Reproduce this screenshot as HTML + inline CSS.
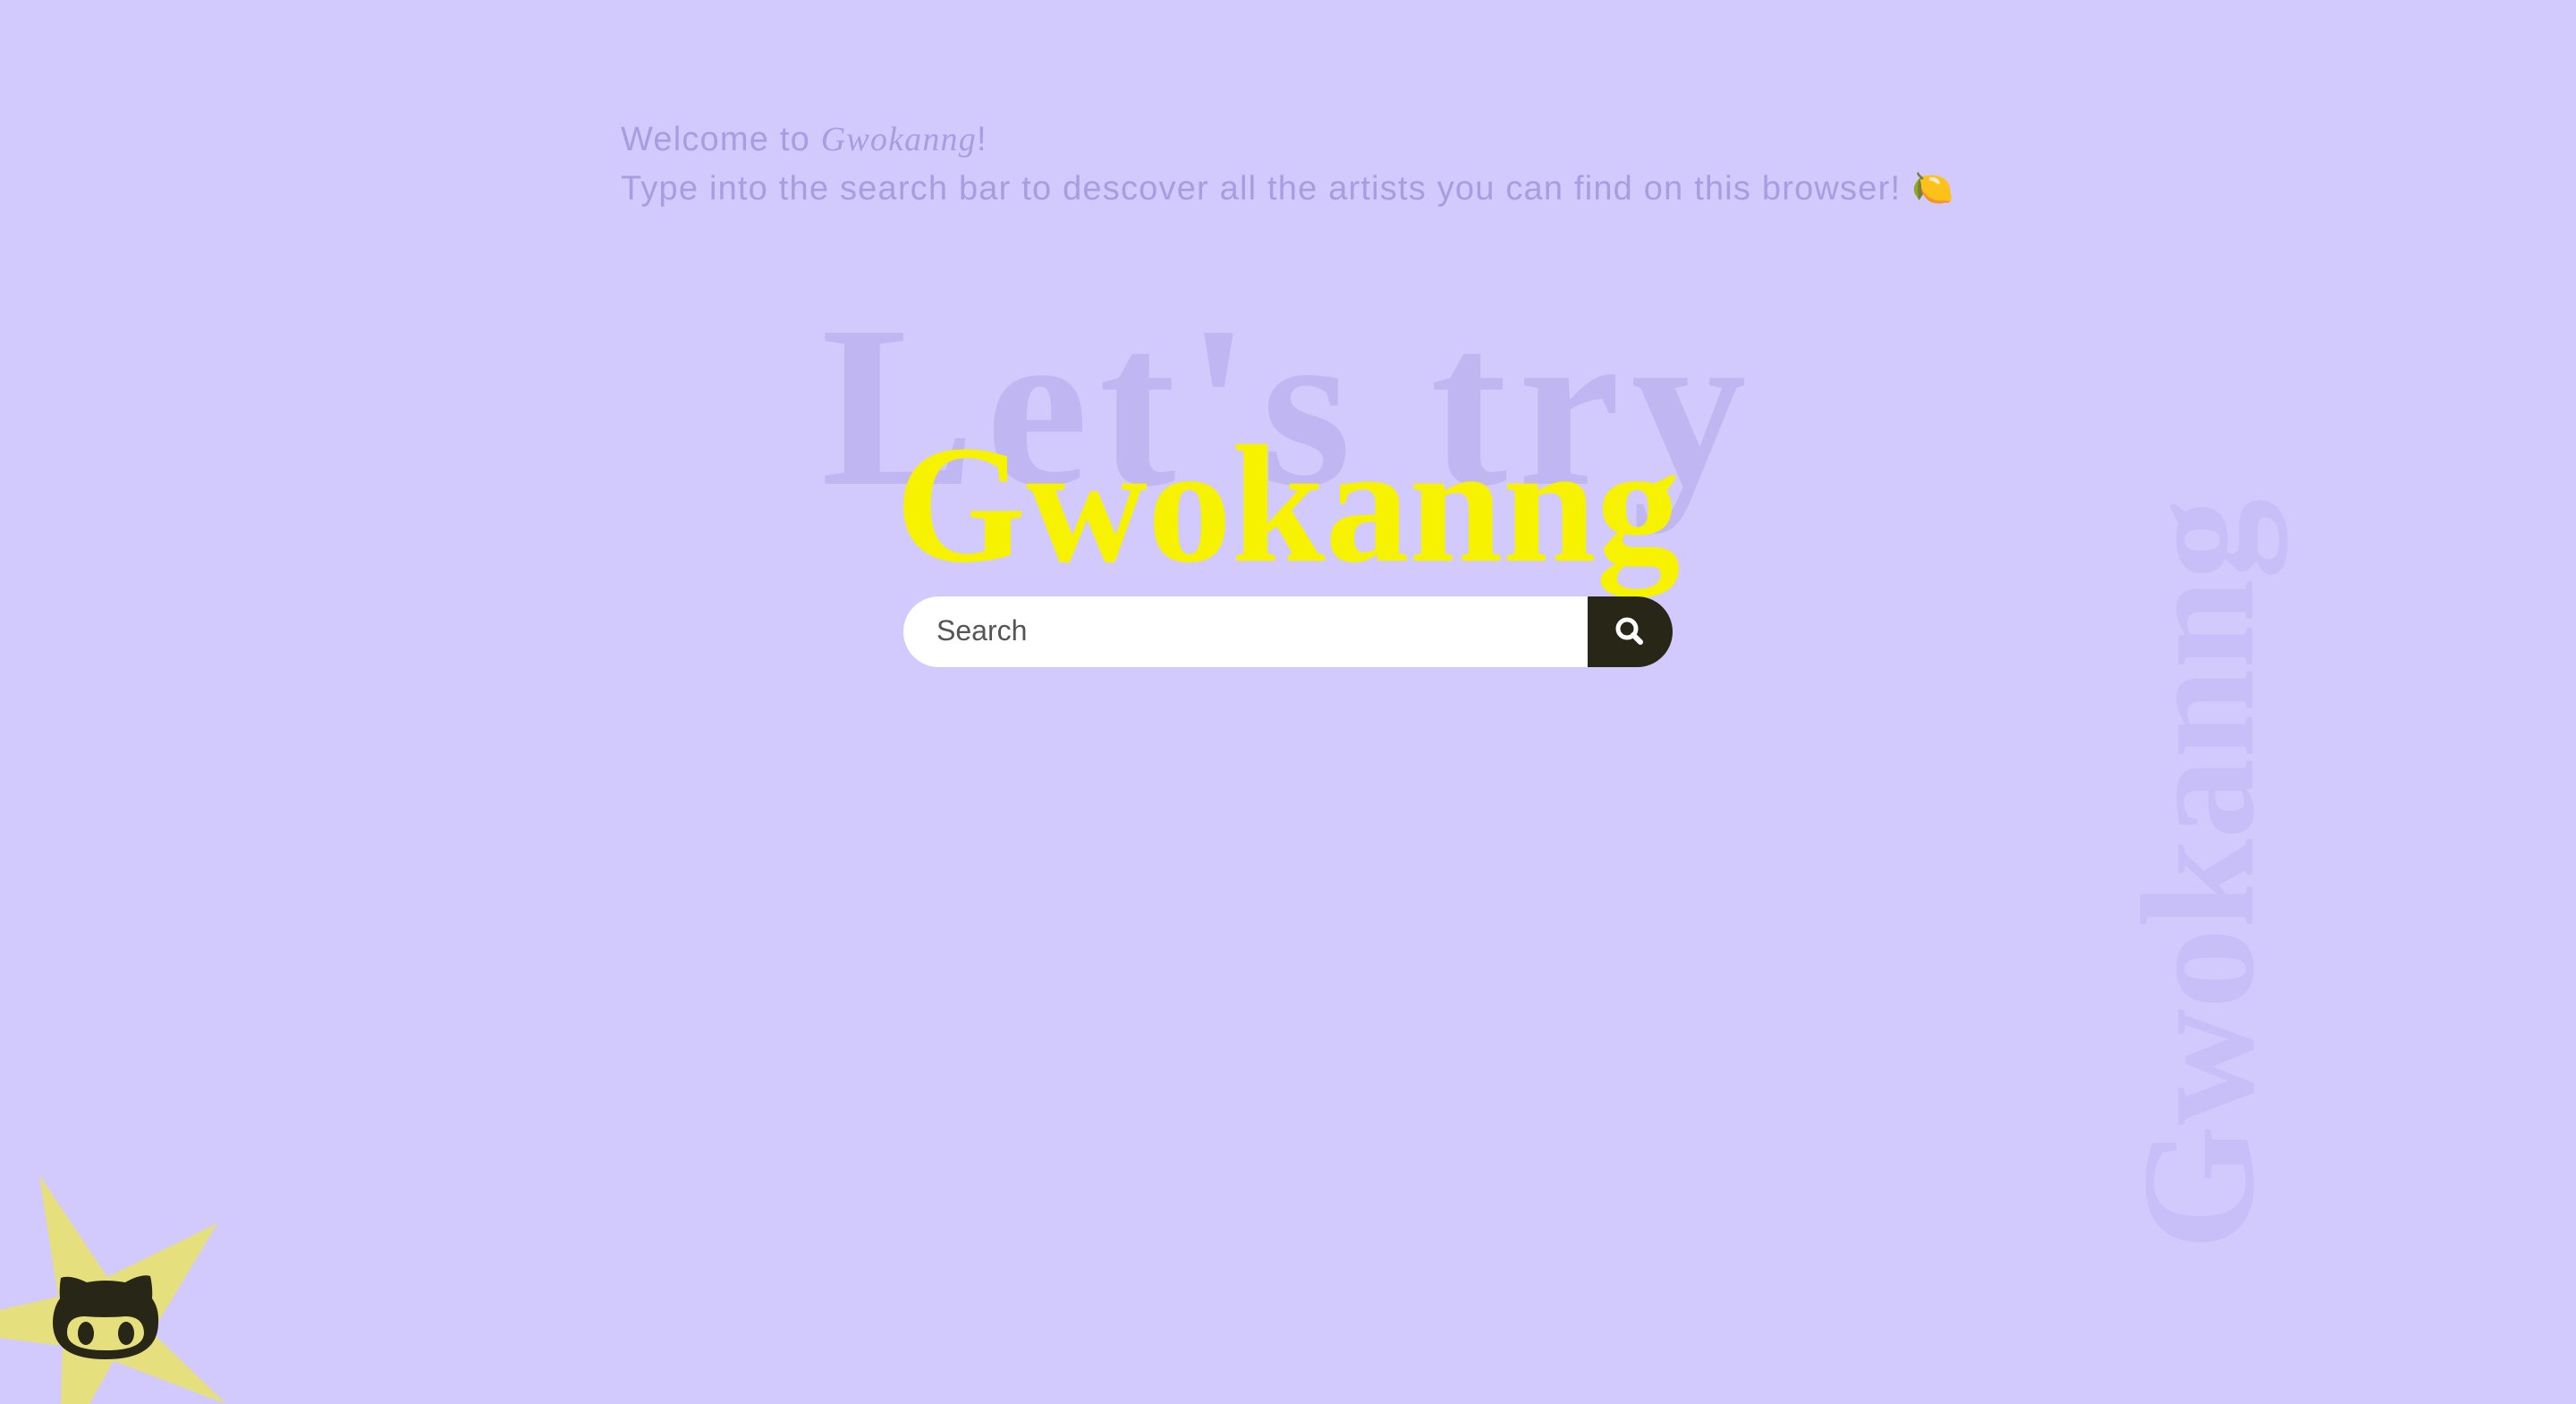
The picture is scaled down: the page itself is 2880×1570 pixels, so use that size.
<!DOCTYPE html>
<html><head><meta charset="utf-8"><style>
html,body{margin:0;padding:0}
body{width:2880px;height:1570px;background:#d2c9fd;position:relative;overflow:hidden;font-family:"Liberation Sans",sans-serif}
.t{position:absolute;white-space:nowrap}
.intro{left:694px;color:#a99de2;font-size:38px;letter-spacing:1.2px}
.intro i{font-family:"Liberation Serif",serif;font-style:italic}
.lets{left:918px;top:325px;font-family:"Liberation Serif",serif;font-size:258px;font-weight:bold;color:#c0b6f2;line-height:1;letter-spacing:12px}
.gw{left:1001px;top:470px;font-family:"Liberation Serif",serif;font-size:188px;color:#f7f300;line-height:1;font-weight:bold}
.bar{position:absolute;left:1010px;top:667px;width:860px;height:79px;background:#fff;border-radius:40px;overflow:hidden}
.bar span{position:absolute;left:37px;top:20px;font-size:32px;color:#555}
.btn{position:absolute;right:0;top:0;width:95px;height:79px;background:#272617}
.vert{left:2368px;top:1398px;transform-origin:0 0;transform:rotate(-90deg);font-family:"Liberation Serif",serif;font-size:180px;font-weight:bold;color:#c8bef8;line-height:1}
</style></head><body>
<div class="t intro" style="top:134px">Welcome to <i>Gwokanng</i>!</div>
<div class="t intro" style="top:189px">Type into the search bar to descover all the artists you can find on this browser! 🍋</div>
<div class="t lets">Let's try</div>
<div class="t gw">Gwokanng</div>
<div class="bar"><span>Search</span><div class="btn">
<svg width="95" height="79" viewBox="0 0 95 79"><circle cx="44" cy="36" r="10" fill="none" stroke="#fff" stroke-width="5"/><line x1="51" y1="43" x2="59" y2="51" stroke="#fff" stroke-width="6" stroke-linecap="round"/></svg></div></div>
<div class="t vert">Gwokanng</div>
<svg style="position:absolute;left:0;top:1290px" width="280" height="280" viewBox="0 1290 280 280">
<polygon fill="#e5df7e" points="44,1314 120,1428 243,1368 170,1490 253,1570 127,1522 100,1570 68,1570 70,1505 -10,1495 -10,1467 65,1450"/>
<g fill="#272617">
<path d="M68,1429 Q78,1425 97,1434 Q118,1430 140,1434 Q158,1424 168,1427 Q171,1440 170,1452 Q178,1463 177,1480 Q176,1520 118,1520 Q60,1520 59,1480 Q59,1463 67,1452 Q66,1440 68,1429Z"/>
</g>
<path fill="#e5df7e" d="M75,1490 Q75,1472 95,1472 Q118,1474 140,1472 Q160,1472 161,1490 Q161,1510 118,1510 Q75,1510 75,1490Z"/>
<ellipse cx="96" cy="1491" rx="9" ry="13" fill="#272617"/>
<ellipse cx="141" cy="1491" rx="9" ry="13" fill="#272617"/>
</svg>
</body></html>
